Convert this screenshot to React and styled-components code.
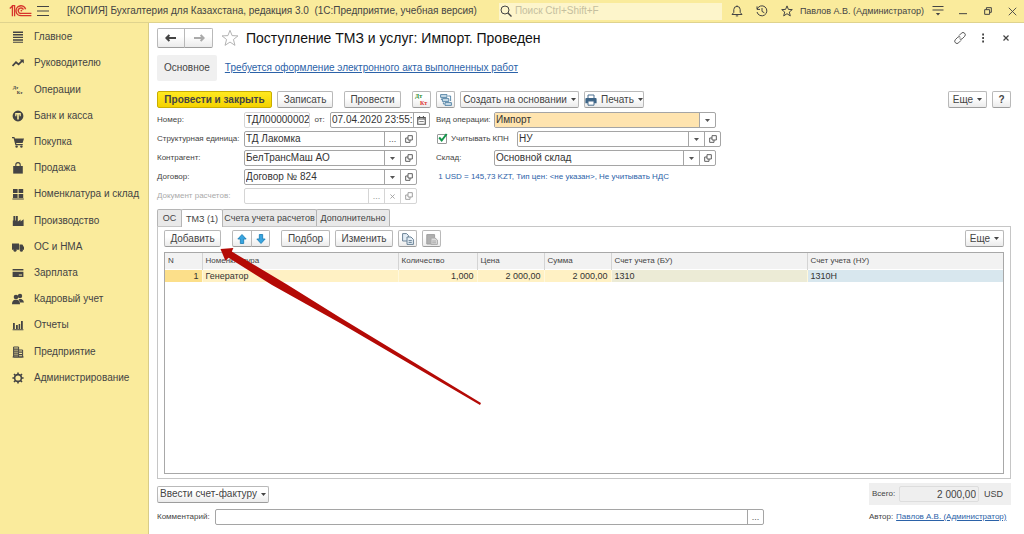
import React from "react";
import styled, { createGlobalStyle, css } from "styled-components";

const GlobalStyle = createGlobalStyle`
  * {
    box-sizing: border-box;
    margin: 0;
    padding: 0;
  }
  body {
    font-family: "Liberation Sans", Arial, sans-serif;
    font-size: 10px;
    line-height: 12px;
    color: #444;
    background: #fff;
  }
  button, input, select {
    font: inherit;
    color: inherit;
  }
  ul {
    list-style: none;
  }
  svg {
    display: block;
    flex: none;
  }
`;

/* icons */

const Icon = ({ size = 12, children, ...rest }) => (
  <svg
    width={size}
    height={size}
    viewBox='0 0 12 12'
    fill='none'
    stroke='currentColor'
    aria-hidden='true'
    {...rest}
  >
    {children}
  </svg>
);

const Solid = ({ children }) => (
  <Icon fill='currentColor' stroke='none'>
    {children}
  </Icon>
);

const Logo = () => (
  <svg width='23' height='12' viewBox='0 0 23 12' fill='none' stroke='#d6342c' aria-hidden='true'>
    <path d='M0.8 3.4 L3.4 1 V11.2 M2.8 0.7 H5.6 V11.2' strokeWidth='1.3' />
    <path d='M16.6 4.2 A4.9 4.9 0 1 0 12.4 10.6 H22.4' strokeWidth='1.4' />
    <path d='M14.4 4.6 A2.7 2.7 0 1 0 12.4 8.4 H22.4' strokeWidth='1.4' />
    <circle cx='12.4' cy='5.6' r='0.9' fill='#d6342c' stroke='none' />
  </svg>
);

const DtKt = ({ dt = "currentColor", kt = "currentColor", size = 12 }) => (
  <Icon
    size={size}
    viewBox='0 0 15 15'
    stroke='none'
    fontFamily='Liberation Serif, serif'
    fontWeight='bold'
    fontSize='6'
  >
    <text x='1' y='6' fill={dt}>Дт</text>
    <text x='6' y='13' fill={kt}>Кт</text>
  </Icon>
);

const OpenIcon = () => (
  <Icon size={8}>
    <path d='M4.5 1 H11 V7.5 H4.5 Z M4.5 4.5 H1 V11 H7.5 V7.5' strokeWidth='1.4' />
  </Icon>
);

const Caret = () => (
  <svg width='5' height='3' viewBox='0 0 5 3' fill='currentColor' aria-hidden='true'>
    <path d='M0 0 H5 L2.5 3 Z' />
  </svg>
);

const CrossIcon = ({ size = 10, width = 1.2 }) => (
  <Icon size={size}>
    <path d='M1 1 L11 11 M11 1 L1 11' strokeWidth={width} />
  </Icon>
);

const StarIcon = ({ size, width = 1 }) => (
  <Icon size={size} strokeWidth={width}>
    <path d='M6 0.9 L7.4 4.4 L11.3 4.6 L8.3 7 L9.3 10.9 L6 8.7 L2.7 10.9 L3.7 7 L0.7 4.6 L4.6 4.4 Z' />
  </Icon>
);

const sections = [
  ["Главное", <Solid><path d='M1 0.5h10v1.4H1zM1 3.1h10v1.4H1zM1 5.7h10v1.4H1zM1 8.3h10v1.4H1zM1 10.7h10v1H1z' /></Solid>],
  ["Руководителю", <Icon><path d='M0.5 9 L4 5.2 L6.6 7.4 L10.4 3.6' strokeWidth='1.8' /><path d='M7.6 2.4 H11.8 V6.6 Z' fill='currentColor' stroke='none' /></Icon>],
  ["Операции", <DtKt />],
  ["Банк и касса", <Solid><path fillRule='evenodd' d='M6 0.6 A5.4 5.4 0 1 1 6 11.4 A5.4 5.4 0 1 1 6 0.6 Z M3.2 3 V6.2 H4.4 V4.6 H5.2 V9.4 H6.8 V4.6 H7.6 V6.2 H8.8 V3 Z' /></Solid>],
  ["Покупка", <Solid><path d='M0 1 H2.4 L2.9 2.4 H12 L10.6 7 H4.2 L4.4 8 H10.8 V9.2 H3.4 L1.6 2.2 H0 Z' /><circle cx='4.6' cy='10.6' r='1.2' /><circle cx='9.4' cy='10.6' r='1.2' /></Solid>],
  ["Продажа", <Icon><path d='M1.2 4 H10.8 V11.6 H1.2 Z' fill='currentColor' stroke='none' /><path d='M3.8 6 V2.8 A2.2 2.2 0 0 1 8.2 2.8 V6' strokeWidth='1.1' /></Icon>],
  ["Номенклатура и склад", <Solid><path d='M1 1h4.6v4H1zM6.6 1H11.2v4H6.6zM1 6h4.6v4H1zM6.6 6H11.2v4H6.6zM0.4 10.6h11.4v1H0.4z' /></Solid>],
  ["Производство", <Solid><path d='M0.8 11 V5.4 L1.4 5.4 V1 H3.2 V5.4 H3.8 V1 H5.8 V6.6 L8.6 4.4 V6.6 L11.6 4.2 V11 Z' /></Solid>],
  ["ОС и НМА", <Solid><path d='M0 2.4 H7 V8.8 H0 Z M7.5 3.6 H10.4 L12 6.2 V8.8 H7.5 Z' /><circle cx='3' cy='9.2' r='1.5' /><circle cx='9.4' cy='9.2' r='1.5' /></Solid>],
  ["Зарплата", <Solid><path fillRule='evenodd' d='M0.6 2 H11.4 V3.6 H0.6 Z M0.6 4.8 H11.4 V10 H0.6 Z M6.8 7.4 V8.4 H10 V7.4 Z' /></Solid>],
  ["Кадровый учет", <Solid><circle cx='8' cy='3' r='2.2' /><path d='M6.6 6 H9.4 Q11.8 7 12 9.6 H8 Z' /><circle cx='4' cy='4' r='2.3' /><path d='M0 11.2 Q0 7.6 2.8 6.8 H5.2 Q8 7.6 8 11.2 Z' /></Solid>],
  ["Отчеты", <Solid><path d='M1 4h1.8v6H1zM4 6h1.8v4H4zM6.6 5h1.6v5H6.6zM9 2h1.8v8H9zM0.6 10.2h10.8v1H0.6z' /></Solid>],
  ["Предприятие", <Icon><path d='M1.6 1 H6.6 V11 H1.6 Z M6.6 4 H10.6 V11 H6.6 M0.6 11 H11.6' strokeWidth='1' /><path d='M2 3.2 H6 M2 5.2 H6 M2 7.2 H6 M2 9.2 H6 M7 6.2 H10 M7 8.6 H10' strokeWidth='1.2' /></Icon>],
  ["Администрирование", <Icon><circle cx='6' cy='6' r='3.4' strokeWidth='1.6' /><path d='M6 0.4 V2.4 M6 9.6 V11.6 M0.4 6 H2.4 M9.6 6 H11.6 M2 2 L3.4 3.4 M8.6 8.6 L10 10 M10 2 L8.6 3.4 M3.4 8.6 L2 10' strokeWidth='1.6' /></Icon>],
];

/* window frame */

const Page = styled.div`
  position: relative;
  display: flex;
  flex-direction: column;
  min-height: 100vh;
`;

const TopBar = styled.header`
  display: flex;
  align-items: center;
  height: 23px;
  padding-left: 9px;
  background: #faeb9c;
  border-bottom: 1px solid #dfd38e;
`;

const AppTitle = styled.p`
  flex: 1;
  margin-left: 14px;
  white-space: pre;
`;

const IconButton = styled.button`
  display: flex;
  align-items: center;
  justify-content: center;
  width: ${({ $w }) => $w || 25}px;
  height: 20px;
  border: 0;
  background: none;
  color: #444;
`;

const FavButton = styled(IconButton)`
  margin-left: 8px;
  color: #aaa;
`;

const Search = styled.label`
  display: flex;
  align-items: center;
  gap: 3px;
  width: 223px;
  height: 17px;
  margin-right: 3px;
  padding-left: 1px;
  background: #fdf5cb;
  input {
    flex: 1;
    min-width: 0;
    border: 0;
    background: none;
  }
  input::placeholder {
    color: #c5bf9f;
    opacity: 1;
  }
`;

const UserName = styled.span`
  margin-right: 1px;
  font-size: 9px;
`;

const Columns = styled.div`
  display: flex;
  flex: 1;
`;

const Sidebar = styled.nav`
  flex: none;
  width: 149px;
  background: #faeb9c;
  border-right: 1px solid #d8cc88;
  ul {
    display: grid;
    grid-auto-rows: 1fr;
    height: 367px;
    margin-top: 1px;
  }
  a {
    display: flex;
    align-items: center;
    gap: 10px;
    height: 100%;
    padding-left: 12px;
    color: #444;
    text-decoration: none;
  }
`;

const Main = styled.main`
  display: flex;
  flex: 1;
  flex-direction: column;
  min-width: 0;
  padding: 5px 13px 9px 8px;
`;

/* shared controls */

const Row = styled.div`
  display: flex;
  align-items: center;
  gap: ${({ $gap }) => $gap || 0}px;
`;

const FormTools = styled(Row)`
  margin-right: -6px;
`;

const Spacer = styled.div`
  flex: 1;
`;

const Button = styled.button`
  display: flex;
  align-items: center;
  justify-content: center;
  gap: 4px;
  flex: none;
  width: ${({ $w }) => $w}px;
  height: 17px;
  border: 1px solid #b9b9b9;
  border-bottom-color: #9c9c9c;
  border-radius: 2px;
  background: linear-gradient(#fff 40%, #ebebeb);
  white-space: nowrap;
  ${({ $primary }) =>
    $primary &&
    css`
      border-color: #c9ae00;
      background: linear-gradient(#ffe920, #f4d200);
      font-weight: bold;
    `}
  &:disabled {
    color: #aaa;
  }
`;

const Pair = styled.div`
  display: flex;
  button {
    height: ${({ $h }) => $h || 17}px;
  }
  button:first-child {
    border-radius: 2px 0 0 2px;
  }
  button:last-child {
    margin-left: -1px;
    border-radius: 0 2px 2px 0;
  }
`;

const Link = styled.a`
  color: #2b62a8;
  text-decoration: ${({ $plain }) => ($plain ? "none" : "underline")};
  font-size: ${({ $small }) => ($small ? 8 : 10)}px;
`;

/* form */

const Heading = styled.h1`
  margin-left: 7px;
  font-size: 14px;
  line-height: 18px;
  font-weight: normal;
  color: #111;
`;

const Links = styled.div`
  display: flex;
  align-items: center;
  gap: 8px;
  margin: 7px 0 10px;
`;

const ActiveLink = styled.a`
  padding: 7px;
  border-radius: 2px;
  background: #f0f0f0;
  color: #444;
  text-decoration: none;
`;

const Fields = styled.div`
  display: grid;
  grid-template-columns: 273px 1fr;
  column-gap: 6px;
  margin-top: 4px;
`;

const FieldColumn = styled.div`
  display: flex;
  flex-direction: column;
  gap: 3px;
`;

const Line = styled.div`
  display: flex;
  align-items: center;
  height: 16px;
`;

const Label = styled.label`
  flex: none;
  width: ${({ $w }) => ($w ? `${$w}px` : "auto")};
  font-size: 8px;
  color: ${({ $muted }) => ($muted ? "#aaa" : "#444")};
`;

const Box = styled.span`
  display: flex;
  flex: none;
  width: ${({ $w }) => $w}px;
  height: 16px;
  border: 1px solid ${({ $light }) => ($light ? "#d5d5d5" : "#a5a5a5")};
  border-radius: 2px;
  overflow: hidden;
  color: ${({ $light }) => ($light ? "#999" : "#555")};
  input, select {
    flex: 1;
    min-width: 0;
    padding-left: 1px;
    border: 0;
    background: none;
    color: #333;
    appearance: none;
  }
  select {
    background: #ffe4af;
  }
  button, i {
    display: flex;
    align-items: center;
    justify-content: center;
    width: 16px;
    border: 0;
    border-left: 1px solid ${({ $light }) => ($light ? "#d5d5d5" : "#a5a5a5")};
    background: none;
    font-size: 9px;
    font-style: normal;
  }
`;

const Check = styled.span`
  position: relative;
  display: flex;
  width: 10px;
  height: 10px;
  margin: 0 4px 0 1px;
  input {
    width: 10px;
    height: 10px;
    border: 1px solid #999;
    border-radius: 1px;
    appearance: none;
  }
  svg {
    position: absolute;
    left: 1px;
    top: -1px;
    pointer-events: none;
  }
`;

const glyphs = {
  open: ["Открыть", <OpenIcon />],
  list: ["Выбрать из списка", <Caret />],
  more: ["Выбрать", "..."],
  clear: ["Очистить", <CrossIcon size={5} width={2} />],
};

const Field = ({ id, w, value, buttons = [], light }) => (
  <Box $w={w} $light={light}>
    <input id={id} defaultValue={value} disabled={light && !value} />
    {buttons.map((name) => (
      <button type='button' key={name} aria-label={glyphs[name][0]}>
        {glyphs[name][1]}
      </button>
    ))}
  </Box>
);

/* tabs and table */

const Tabs = styled.div`
  display: flex;
  margin-top: 5px;
`;

const Tab = styled.button`
  height: 17px;
  width: ${({ $w }) => $w}px;
  margin-right: -1px;
  border: 1px solid #b5b5b5;
  border-bottom: 0;
  border-radius: 2px 2px 0 0;
  background: ${({ $active }) => ($active ? "#fff" : "#e9e9e9")};
  font-size: 9px;
  white-space: nowrap;
  ${({ $active }) =>
    $active &&
    css`
      position: relative;
      height: 18px;
      margin-bottom: -1px;
    `}
`;

const Panel = styled.section`
  display: flex;
  flex: 1;
  flex-direction: column;
  gap: 5px;
  padding: 3px 6px 4px;
  border: 1px solid #c6c6c6;
`;

const TableBox = styled.div`
  flex: 1;
  border: 1px solid #a8a8a8;
`;

const Table = styled.table`
  width: 100%;
  border-collapse: collapse;
  table-layout: fixed;
  font-size: 9px;
  th {
    height: 16px;
    padding: 0 3px;
    border-right: 1px solid #d4d4d4;
    background: #f2f2f2;
    font-size: 8px;
    font-weight: normal;
    text-align: left;
    color: #444;
  }
  td {
    height: 13px;
    padding: 0 3px;
    border-right: 1px solid #fff8dc;
    border-top: 1px solid #fff;
    color: #333;
  }
  th:last-child, td:last-child {
    border-right: 0;
  }
`;

const Cell = styled.td`
  background: ${({ $bg }) => $bg || "#fff1c4"};
  text-align: ${({ $num }) => ($num ? "right" : "left")};
`;

const columns = [
  ["N", 37],
  ["Номенклатура", 196],
  ["Количество", 79],
  ["Цена", 67],
  ["Сумма", 67],
  ["Счет учета (БУ)", 196],
  ["Счет учета (НУ)"],
];

const Footer = styled.footer`
  display: grid;
  grid-template-columns: 1fr auto;
  align-items: center;
  gap: 4px 20px;
  margin-top: 4px;
`;

const Total = styled.div`
  display: flex;
  align-items: center;
  height: 22px;
  width: 142px;
  padding: 0 4px 0 3px;
  background: #efefef;
  font-size: 9px;
  label {
    width: 27px;
    font-size: 8px;
  }
  input {
    width: 80px;
    height: 16px;
    margin-right: 5px;
    padding-right: 2px;
    border: 1px solid #ddd;
    border-radius: 2px;
    background: none;
    font-size: 10px;
    text-align: right;
  }
`;

const Pointer = styled.svg`
  position: absolute;
  left: 220px;
  top: 247px;
  pointer-events: none;
`;

const App = () => (
  <Page>
    <GlobalStyle />
    <TopBar>
      <Logo />
      <IconButton aria-label='Меню' $w={21}>
        <Icon>
          <path d='M0 1.5 H12 M0 6 H12 M0 10.5 H12' />
        </Icon>
      </IconButton>
      <AppTitle>[КОПИЯ] Бухгалтерия для Казахстана, редакция 3.0  (1С:Предприятие, учебная версия)</AppTitle>
      <Search>
        <Icon>
          <circle cx='5' cy='5' r='4' />
          <path d='M8 8 L11.5 11.5' strokeWidth='1.3' />
        </Icon>
        <input aria-label='Поиск' placeholder='Поиск Ctrl+Shift+F' />
      </Search>
      <IconButton aria-label='Уведомления'>
        <Icon>
          <path d='M1 9.5 H11 L9.2 7.4 V4.6 A3.2 3.2 0 0 0 2.8 4.6 V7.4 Z M6 0.4 V1.4 M4.8 10.9 H7.2' />
        </Icon>
      </IconButton>
      <IconButton aria-label='История'>
        <Icon>
          <path d='M1.2 4 A5 5 0 1 1 1 7 M1 1.4 V4.4 H4 M6 3 V6.4 L8.4 7.8' />
        </Icon>
      </IconButton>
      <IconButton aria-label='Избранное'>
        <StarIcon size={12} />
      </IconButton>
      <UserName>Павлов А.В. (Администратор)</UserName>
      <IconButton aria-label='Настройки'>
        <Icon>
          <path d='M0.5 1.5 H11.5 M0.5 5 H11.5' />
          <path d='M3.8 8 H8.2 L6 10.6 Z' fill='currentColor' stroke='none' />
        </Icon>
      </IconButton>
      <IconButton aria-label='Свернуть'>
        <Icon size={8}>
          <path d='M0 10 H12' strokeWidth='1.5' />
        </Icon>
      </IconButton>
      <IconButton aria-label='Восстановить'>
        <Icon size={8}>
          <path d='M1 4 H8.4 V11 H1 Z M3.6 4 V1 H11 V8 H8.4' strokeWidth='1.5' />
        </Icon>
      </IconButton>
      <IconButton aria-label='Закрыть' $w={24}>
        <CrossIcon size={9} />
      </IconButton>
    </TopBar>

    <Columns>
      <Sidebar>
        <ul>
          {sections.map(([name, icon]) => (
            <li key={name}>
              <a href='#section'>
                {icon}
                {name}
              </a>
            </li>
          ))}
        </ul>
      </Sidebar>

      <Main>
        <Row>
          <Pair $h={20}>
            <Button $w={28} aria-label='Назад'>
              <Icon><path d='M1 6 H11 M4.4 3 L1.4 6 L4.4 9' strokeWidth='2' /></Icon>
            </Button>
            <Button $w={29} aria-label='Вперед' disabled>
              <Icon><path d='M1 6 H11 M7.6 3 L10.6 6 L7.6 9' strokeWidth='2' /></Icon>
            </Button>
          </Pair>
          <FavButton $w={18} aria-label='В избранное'>
            <StarIcon size={18} width={0.6} />
          </FavButton>
          <Heading>Поступление ТМЗ и услуг: Импорт. Проведен</Heading>
          <Spacer />
          <FormTools>
            <IconButton $w={22} aria-label='Получить ссылку'>
              <Icon>
                <path d='M5 3.6 L7.4 1.2 A2.1 2.1 0 0 1 10.6 4.4 L8.2 6.8 A2 2 0 0 1 5.6 6.8 M7 8.4 L4.6 10.8 A2.1 2.1 0 0 1 1.4 7.6 L3.8 5.2 A2 2 0 0 1 6.4 5.2' strokeWidth='0.9' />
              </Icon>
            </IconButton>
            <IconButton $w={23} aria-label='Дополнительно'>
              <Solid><path d='M5.2 1.6h1.8v1.8H5.2zM5.2 5.1h1.8v1.8H5.2zM5.2 8.6h1.8v1.8H5.2z' /></Solid>
            </IconButton>
            <IconButton $w={23} aria-label='Закрыть форму'>
              <CrossIcon size={6} width={2.4} />
            </IconButton>
          </FormTools>
        </Row>

        <Links>
          <ActiveLink href='#main'>Основное</ActiveLink>
          <Link href='#act'>Требуется оформление электронного акта выполненных работ</Link>
        </Links>

        <Row $gap={11}>
          <Row $gap={5}>
            <Button $w={115} $primary>Провести и закрыть</Button>
            <Button $w={56}>Записать</Button>
          </Row>
          <Button $w={57}>Провести</Button>
          <Row $gap={5}>
            <Button $w={19} aria-label='Движения документа'>
              <DtKt dt='#1c8a2c' kt='#e0302c' size={15} />
            </Button>
            <Button $w={19} aria-label='Структура подчиненности'>
              <Icon stroke='#4d7fa3' strokeWidth='0.9'>
                <path d='M0.6 0.6 H7 V3.4 H0.6 Z M2.4 4.6 H8.8 V7.4 H2.4 Z M5 8.6 H11.4 V11.4 H5 Z' fill='#cfe0ec' />
                <path d='M8.2 2 H10.6 V7 M1.4 4.4 V6 M3.4 8.4 V10 H4.6' />
              </Icon>
            </Button>
            <Button $w={119}>Создать на основании <Caret /></Button>
            <Button $w={60}>
              <Icon>
                <path d='M3 4 V1 H9 V4' stroke='#4b6f8f' fill='#fff' />
                <path d='M0.4 5 Q0.4 4 1.4 4 H10.6 Q11.6 4 11.6 5 V9.2 H0.4 Z' fill='#3d6486' stroke='none' />
                <path d='M3 7 H9 V11.2 H3 Z' stroke='#4b6f8f' fill='#fff' />
              </Icon>
              Печать <Caret />
            </Button>
          </Row>
          <Spacer />
          <Row $gap={5}>
            <Button $w={39}>Еще <Caret /></Button>
            <Button $w={19}><b>?</b></Button>
          </Row>
        </Row>

        <Fields>
          <FieldColumn>
            <Line>
              <Label $w={87} htmlFor='number'>Номер:</Label>
              <Field id='number' w={66} value='ТДЛ00000002' light />
              <Label $w={20} htmlFor='date'>&nbsp; от:</Label>
              <Box $w={100}>
                <input id='date' defaultValue='07.04.2020 23:55:2' />
                <button type='button' aria-label='Календарь'>
                  <Icon size={9}>
                    <path d='M1 2 H11 V11 H1 Z M3.4 0 V3 M8.6 0 V3 M1 4 H11' strokeWidth='1.5' />
                    <path d='M3 7.4 H9' strokeWidth='1' />
                  </Icon>
                </button>
              </Box>
            </Line>
            <Line>
              <Label $w={87} htmlFor='unit'>Структурная единица:</Label>
              <Field id='unit' w={173} value='ТД Лакомка' buttons={["more", "open"]} />
            </Line>
            <Line>
              <Label $w={87} htmlFor='partner'>Контрагент:</Label>
              <Field id='partner' w={173} value='БелТрансМаш АО' buttons={["list", "open"]} />
            </Line>
            <Line>
              <Label $w={87} htmlFor='contract'>Договор:</Label>
              <Field id='contract' w={173} value='Договор № 824' buttons={["list", "open"]} />
            </Line>
            <Line>
              <Label $w={87} $muted htmlFor='payment'>Документ расчетов:</Label>
              <Field id='payment' w={173} light buttons={["more", "clear", "open"]} />
            </Line>
          </FieldColumn>

          <FieldColumn>
            <Line>
              <Label $w={58} htmlFor='kind'>Вид операции:</Label>
              <Box $w={222}>
                <select id='kind'>
                  <option>Импорт</option>
                </select>
                <i><Caret /></i>
              </Box>
            </Line>
            <Line>
              <Check>
                <input type='checkbox' id='kpn' defaultChecked />
                <Icon size={10}>
                  <path d='M1.4 5.4 L4.4 9 L10.4 1.2' stroke='#12954a' strokeWidth='2.4' />
                </Icon>
              </Check>
              <Label $w={66} htmlFor='kpn'>Учитывать КПН</Label>
              <Field id='accounting' w={204} value='НУ' buttons={["list", "open"]} />
            </Line>
            <Line>
              <Label $w={58} htmlFor='store'>Склад:</Label>
              <Field id='store' w={222} value='Основной склад' buttons={["list", "open"]} />
            </Line>
            <Line>
              <Link $plain $small href='#rate'>
                &nbsp;1 USD = 145,73 KZT, Тип цен: &lt;не указан&gt;, Не учитывать НДС
              </Link>
            </Line>
          </FieldColumn>
        </Fields>

        <Tabs role='tablist'>
          <Tab role='tab' $w={25}>ОС</Tab>
          <Tab role='tab' $w={42} $active>ТМЗ (1)</Tab>
          <Tab role='tab' $w={95}>Счета учета расчетов</Tab>
          <Tab role='tab' $w={74}>Дополнительно</Tab>
        </Tabs>
        <Panel>
          <Row $gap={11}>
            <Button $w={57}>Добавить</Button>
            <Pair>
              <Button $w={20} aria-label='Вверх'>
                <Icon size={10}><path d='M6 0.6 L11 6 H8 V11.4 H4 V6 H1 Z' fill='#38a5e0' stroke='#1b7db5' /></Icon>
              </Button>
              <Button $w={19} aria-label='Вниз'>
                <Icon size={10}><path d='M6 11.4 L11 6 H8 V0.6 H4 V6 H1 Z' fill='#38a5e0' stroke='#1b7db5' /></Icon>
              </Button>
            </Pair>
            <Row $gap={5}>
              <Button $w={49}>Подбор</Button>
              <Button $w={58}>Изменить</Button>
              <Button $w={19} aria-label='Скопировать'>
                <Icon stroke='#6b8296'>
                  <path d='M0.6 0.6 H4.6 L6.6 2.6 V8 H0.6 Z' fill='#e3edf5' />
                  <path d='M5 4 H9 L11.4 6.4 V11.4 H5 Z M6.6 7.6 H9.8 M6.6 9.4 H9.8' fill='#e3edf5' />
                </Icon>
              </Button>
              <Button $w={19} aria-label='Вставить' disabled>
                <Icon>
                  <path d='M0.8 1.6 H8.6 V11 H0.8 Z' fill='#b0b0b0' stroke='#a0a0a0' />
                  <path d='M5 5 H9 L11.4 7 V11.4 H5 Z M6.2 8 H10 M6.2 9.8 H10' fill='#ddd' />
                </Icon>
              </Button>
            </Row>
            <Spacer />
            <Button $w={39}>Еще <Caret /></Button>
          </Row>
          <TableBox>
            <Table>
              <colgroup>
                {columns.map(([name, width]) => (
                  <col key={name} width={width} />
                ))}
              </colgroup>
              <thead>
                <tr>
                  {columns.map(([name]) => (
                    <th key={name}>{name}</th>
                  ))}
                </tr>
              </thead>
              <tbody>
                <tr>
                  <Cell $num $bg='#fcdf8a'>1</Cell>
                  <Cell>Генератор</Cell>
                  <Cell $num>1,000</Cell>
                  <Cell $num>2 000,00</Cell>
                  <Cell $num>2 000,00</Cell>
                  <Cell $bg='#ecebd6'>1310</Cell>
                  <Cell $bg='#d8e7ee'>1310Н</Cell>
                </tr>
              </tbody>
            </Table>
          </TableBox>
        </Panel>

        <Footer>
          <Button $w={112}>Ввести счет-фактуру <Caret /></Button>
          <Total>
            <label htmlFor='total'>Всего:</label>
            <input id='total' defaultValue='2 000,00' readOnly />
            USD
          </Total>
          <Line>
            <Label $w={58} htmlFor='comment'>Комментарий:</Label>
            <Field id='comment' w={549} buttons={["more"]} />
          </Line>
          <Row $gap={3}>
            <Label as='span'>Автор:</Label>
            <Link $small href='#author'>Павлов А.В. (Администратор)</Link>
          </Row>
        </Footer>
      </Main>
    </Columns>

    <Pointer width='264' height='160' viewBox='0 0 264 160' fill='#b40a06' aria-hidden='true'>
      <path d='M0.5 2 L13.4 1 L11.8 4.6 L67 37.6 L120 70.4 L261 156 L260 158 L120 76 L52 38 L8.6 10.8 L5.4 13.8 Z' />
    </Pointer>
  </Page>
);

export default App;
